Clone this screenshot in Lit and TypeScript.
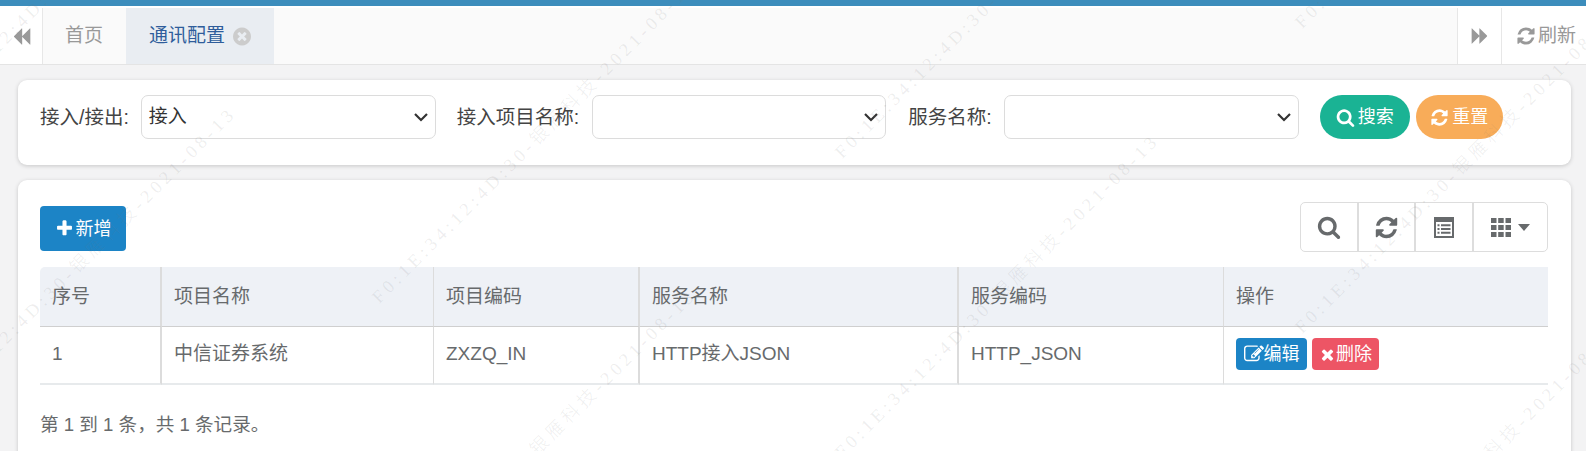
import { LitElement, html, css, svg } from "lit";
import { customElement } from "lit/decorators.js";

const marks: [number, number][] = [
  [-78, 123], [-78, 423], [382, 295], [382, 605], [845, 150], [845, 450], [1305, 20], [1305, 325], [1305, 640],
];
const WM = "F0:1E:34:12:4D:30-银雁科技-2021-08-13";

const fa = (d: string, size: number, fill = "currentColor") =>
  html`<svg width=${size} height=${size} viewBox="0 0 1792 1792" fill=${fill}>${svg`<path d=${d}/>`}</svg>`;

const SEARCH = "M1216 832q0-185-131.500-316.500t-316.500-131.500-316.500 131.500-131.500 316.500 131.500 316.500 316.500 131.500 316.500-131.500 131.500-316.500zm512 832q0 52-38 90t-90 38q-54 0-90-38l-343-342q-179 124-399 124-143 0-273.500-55.500t-225-150-150-225-55.500-273.500 55.500-273.500 150-225 225-150 273.500-55.500 273.500 55.500 225 150 150 225 55.500 273.500q0 220-124 399l343 343q37 37 37 90z";
const REFRESH = "M1639 1056q0 5-1 7-64 268-268 434.500t-478 166.500q-146 0-282.500-55t-243.500-157l-129 129q-19 19-45 19t-45-19-19-45v-448q0-26 19-45t45-19h448q26 0 45 19t19 45-19 45l-137 137q71 66 161 102t187 36q134 0 250-65t186-179q11-17 53-117 8-23 30-23h192q13 0 22.500 9.500t9.500 22.500zm25-800v448q0 26-19 45t-45 19h-448q-26 0-45-19t-19-45 19-45l138-138q-148-137-349-137-134 0-250 65t-186 179q-11 17-53 117-8 23-30 23h-199q-13 0-22.500-9.500t-9.500-22.500v-7q65-268 270-434.500t480-166.500q146 0 284 55.500t245 156.500l130-129q19-19 45-19t45 19 19 45z";
const PLUS = "M1600 736v192q0 40-28 68t-68 28h-416v416q0 40-28 68t-68 28h-192q-40 0-68-28t-28-68v-416h-416q-40 0-68-28t-28-68v-192q0-40 28-68t68-28h416v-416q0-40 28-68t68-28h192q40 0 68 28t28 68v416h416q40 0 68 28t28 68z";
const TIMES = "M1490 1322q0 40-28 68l-136 136q-28 28-68 28t-68-28l-294-294-294 294q-28 28-68 28t-68-28l-136-136q-28-28-28-68t28-68l294-294-294-294q-28-28-28-68t28-68l136-136q28-28 68-28t68 28l294 294 294-294q28-28 68-28t68 28l136 136q28 28 28 68t-28 68l-294 294 294 294q28 28 28 68z";
const EDIT = "M888 1184l116-116-152-152-116 116v56h96v96h56zm440-720q-16-16-33 1l-350 350q-17 17-1 33t33-1l350-350q17-17 1-33zm80 594v190q0 119-84.500 203.500t-203.500 84.500h-832q-119 0-203.500-84.500t-84.500-203.500v-832q0-119 84.500-203.500t203.500-84.500h832q63 0 117 25 15 7 18 23 3 17-9 29l-49 49q-14 14-32 8-23-6-45-6h-832q-66 0-113 47t-47 113v832q0 66 47 113t113 47h832q66 0 113-47t47-113v-126q0-13 9-22l64-64q15-15 35-7t20 29zm-96-738l288 288-672 672h-288v-288zm444 132l-92 92-288-288 92-92q28-28 68-28t68 28l152 152q28 28 28 68t-28 68z";
const BACK = "M1683 141q19-19 32-13t13 32v1472q0 26-13 32t-32-13l-710-710q-9-9-13-19v710q0 26-13 32t-32-13l-710-710q-19-19-19-45t19-45l710-710q19-19 32-13t13 32v710q4-10 13-19z";
const FWD = "M109 1651q-19 19-32 13t-13-32v-1472q0-26 13-32t32 13l710 710q9 9 13 19v-710q0-26 13-32t32 13l710 710q19 19 19 45t-19 45l-710 710q-19 19-32 13t-13-32v-710q-4 10-13 19z";
const CIRCLE_X = "M1149 1122q0-26-19-45l-181-181 181-181q19-19 19-45 0-27-19-46l-90-90q-19-19-46-19-26 0-45 19l-181 181-181-181q-19-19-45-19-27 0-46 19l-90 90q-19 19-19 46 0 26 19 45l181 181-181 181q-19 19-19 45 0 27 19 46l90 90q19 19 46 19 26 0 45-19l181-181 181 181q19 19 45 19 27 0 46-19l90-90q19-19 19-46zm387-226q0 209-103 385.500t-279.500 279.500-385.500 103-385.500-103-279.500-279.500-103-385.500 103-385.500 279.500-279.500 385.500-103 385.500 103 279.500 279.500 103 385.500z";

@customElement("app-root")
export class AppRoot extends LitElement {
  static styles = css`
    :host { display: block; position: relative; width: 1586px; height: 451px; overflow: hidden; background: #f3f3f4; font-family: "Liberation Sans", "Noto Sans CJK SC", sans-serif; color: #676a6c; line-height: 24px; }
    .stripe { height: 6px; background: #3c8dbc; }
    .gap { height: 2px; background: #fff; }
    .tabs { display: flex; height: 57px; box-sizing: border-box; background: #fafafa; border-bottom: 1px solid #e4e4e4; font-size: 19px; }
    .nav { width: 43px; box-sizing: border-box; display: flex; align-items: center; justify-content: center; background: #fff; border-right: 1px solid #e7e7e7; color: #999; }
    .nav.r { width: 44px; border-right: none; border-left: 1px solid #e7e7e7; }
    .tab { display: flex; align-items: center; padding: 0 23px; color: #999; box-sizing: border-box; }
    .tab.first { width: 83px; padding-left: 22px; }
    .tab.on { width: 148px; background: #e9edf2; color: #2f5d9b; gap: 8px; }
    .close { flex: none; }
    .spacer { flex: 1; }
    .ref { width: 85px; box-sizing: border-box; display: flex; align-items: center; padding-left: 14px; gap: 2px; background: #fff; border-left: 1px solid #e7e7e7; color: #999; white-space: nowrap; }
    .card { background: #fff; margin: 0 15px 0 18px; border-radius: 9px; box-shadow: 0 1px 4px rgba(0,0,0,.18); }
    .filter { margin-top: 15px; height: 85px; display: flex; align-items: center; padding: 0 0 11px 22px; box-sizing: border-box; font-size: 19.5px; color: #444; }
    .lab { white-space: nowrap; }
    .sel { height: 44px; box-sizing: border-box; border: 1px solid #dcdcdc; border-radius: 7px; margin-left: 12px; display: flex; align-items: center; justify-content: space-between; padding: 0 6px 0 7px; background: #fff; color: #333; font-size: 19px; }
    .sel svg { width: 16px; height: 10px; }
    .s1 { width: 295px; margin-right: 21px; }
    .s2 { width: 294px; margin-left: 13px; margin-right: 22px; }
    .s3 { width: 295px; margin-right: 21px; }
    .pill { height: 44px; box-sizing: border-box; border-radius: 22px; display: flex; align-items: center; justify-content: center; color: #fff; gap: 3px; font-size: 18px; }
    .go { width: 90px; background: #1ab394; margin-right: 6px; }
    .reset { width: 87px; background: #f8ac59; }
    .panel { margin-top: 15px; height: 290px; padding: 22px 23px 0 22px; box-sizing: border-box; font-size: 19px; }
    .bar { display: flex; justify-content: space-between; align-items: flex-start; height: 65px; }
    .add { margin-top: 4px; width: 86px; height: 45px; box-sizing: border-box; background: #1c84c6; border-radius: 4px; color: #fff; display: flex; align-items: center; justify-content: center; gap: 2px; font-size: 18px; }
    .tools { display: flex; height: 50px; box-sizing: border-box; border: 1px solid #ddd; border-radius: 5px; color: #676a6c; }
    .tool { display: flex; align-items: center; justify-content: center; border-right: 2px solid #ddd; box-sizing: border-box; }
    .tool:last-child { border-right: none; }
    .t1 { width: 58px; } .t2 { width: 57px; } .t3 { width: 58px; } .t4 { width: 73px; gap: 7px; }
    .tools svg { fill: #676a6c; }
    table { width: 1508px; border-collapse: separate; border-spacing: 0; table-layout: fixed; }
    th { height: 60px; background: #eef1f6; font-weight: 400; text-align: left; padding: 0 12px; border-bottom: 1px solid #cfcfcf; box-sizing: border-box; color: #676a6c; }
    th:first-child { border-top-left-radius: 5px; }
    td { height: 58px; padding: 0 12px 2px; border-bottom: 2px solid #e7eaec; box-sizing: border-box; color: #676a6c; }
    th, td { border-right: 1px solid #dcdcdc; white-space: nowrap; }
    th:last-child, td:last-child { border-right: none; }
    .thick { border-right-width: 2px; }
    .acts { display: flex; gap: 5px; }
    .act { height: 32px; border-radius: 4px; color: #fff; display: flex; align-items: center; justify-content: center; font-size: 18px; box-sizing: border-box; }
    .edit { width: 71px; background: #1c84c6; }
    .del { width: 67px; background: #ed5565; }
    .foot { margin-top: 28px; color: #676a6c; font-size: 18.6px; }
    .wm { position: absolute; white-space: nowrap; font-family: "Liberation Serif", "Noto Sans CJK SC", serif; font-size: 18px; font-weight: 300; letter-spacing: 4.3px; color: rgba(120,120,120,.13); transform: rotate(-45deg); transform-origin: 0 100%; pointer-events: none; line-height: 20px; }
    .c1 { width: 122px; } .c2 { width: 272px; } .c3 { width: 206px; } .c4 { width: 319px; } .c5 { width: 265px; } .c6 { width: 324px; }
  `;

  private sel(cls: string, val: string) {
    return html`<div class="sel ${cls}"><span>${val}</span><svg viewBox="0 0 16 10"><path d="M2 2l6 6 6-6" fill="none" stroke="#333" stroke-width="2.200"/></svg></div>`;
  }

  render() {
    return html`
      <div class="stripe"></div><div class="gap"></div>
      <div class="tabs">
        <div class="nav">${fa(BACK, 19)}</div>
        <div class="tab first">首页</div>
        <div class="tab on">通讯配置<svg class="close" width="18" height="21" viewBox="0 0 1536 1792" fill="#ccc"><path d=${CIRCLE_X}/></svg></div>
        <div class="spacer"></div>
        <div class="nav r">${fa(FWD, 18)}</div>
        <div class="ref">${fa(REFRESH, 20)}刷新</div>
      </div>
      <div class="card filter">
        <span class="lab">接入/接出:</span>${this.sel("s1", "接入")}
        <span class="lab">接入项目名称:</span>${this.sel("s2", "")}
        <span class="lab">服务名称:</span>${this.sel("s3", "")}
        <div class="pill go">${fa(SEARCH, 19)}搜索</div>
        <div class="pill reset">${fa(REFRESH, 19)}重置</div>
      </div>
      <div class="card panel">
        <div class="bar">
          <div class="add">${fa(PLUS, 19)}新增</div>
          <div class="tools">
            <div class="tool t1">${fa(SEARCH, 24)}</div>
            <div class="tool t2">${fa(REFRESH, 25)}</div>
            <div class="tool t3"><svg width="20" height="21" viewBox="0 0 20 21"><path fill-rule="evenodd" d="M0 0h20v21H0zM2 5v14h16V5zM3.500 7.200h2v2h-2zM7 7.200h9.500v2H7zM3.500 11h2v2h-2zM7 11h9.500v2H7zM3.500 14.800h2v2h-2zM7 14.800h9.500v2H7z"/></svg></div>
            <div class="tool t4"><svg width="20" height="19" viewBox="0 0 20 19"><path d="M0 0h5.500v5H0zM7.200 0h5.500v5H7.200zM14.500 0H20v5h-5.500zM0 7h5.500v5H0zM7.200 7h5.500v5H7.200zM14.500 7H20v5h-5.500zM0 14h5.500v5H0zM7.200 14h5.500v5H7.200zM14.500 14H20v5h-5.500z"/></svg><svg width="12" height="7" viewBox="0 0 12 7"><path d="M0 0h12L6 7z"/></svg></div>
          </div>
        </div>
        <table>
          <colgroup><col class="c1"/><col class="c2"/><col class="c3"/><col class="c4"/><col class="c5"/><col class="c6"/></colgroup>
          <thead><tr><th class="thick">序号</th><th>项目名称</th><th class="thick">项目编码</th><th class="thick">服务名称</th><th>服务编码</th><th>操作</th></tr></thead>
          <tbody><tr><td class="thick">1</td><td>中信证券系统</td><td class="thick">ZXZQ_IN</td><td class="thick">HTTP接入JSON</td><td>HTTP_JSON</td>
            <td><div class="acts">
              <div class="act edit">${fa(EDIT, 20)}编辑</div>
              <div class="act del">${fa(TIMES, 17)}删除</div>
            </div></td></tr></tbody>
        </table>
        <div class="foot">第 1 到 1 条，共 1 条记录。</div>
      </div>
      ${marks.map(([x, y]) => html`<div class="wm" style="left:${x}px;top:${y - 8}px">${WM}</div>`)}
    `;
  }
}
